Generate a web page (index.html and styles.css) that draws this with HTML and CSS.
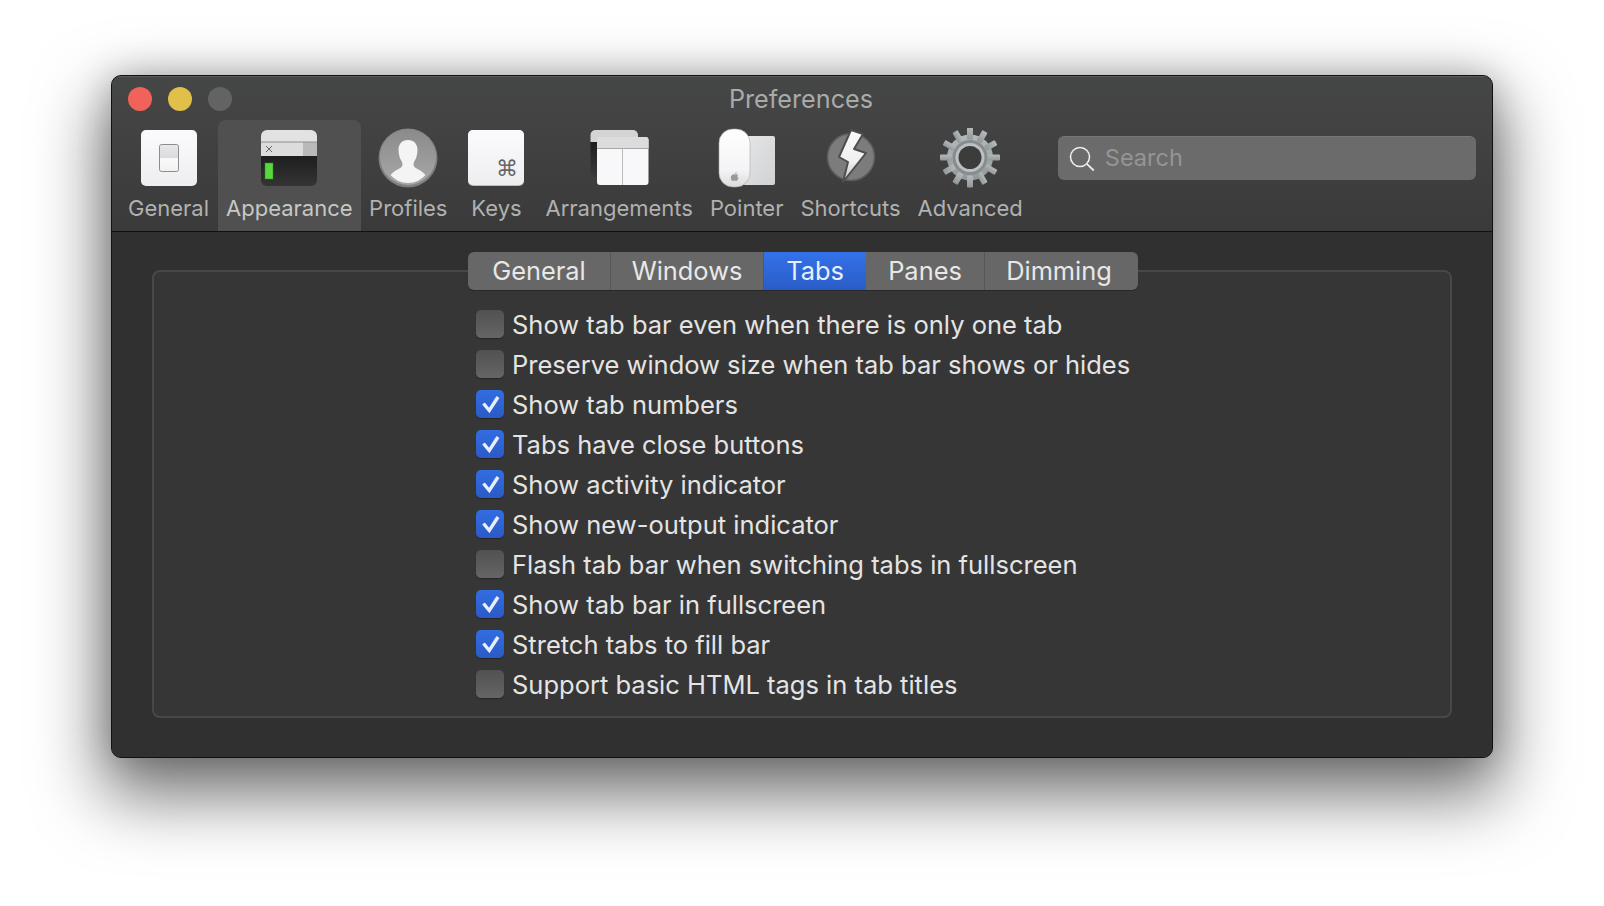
FILE: index.html
```html
<!DOCTYPE html>
<html lang="en">

<head>
    <meta charset="UTF-8">
    <title>Preferences</title>
    <link rel="stylesheet" href="styles.css">
</head>

<body>

    <div class="window">
        <div class="titlebar">
            <div class="lights">
                <span class="light red"></span>
                <span class="light yellow"></span>
                <span class="light gray"></span>
            </div>
            <div class="title">Preferences</div>
        </div>

        <div class="toolbar">
            <div class="tool">
                <svg class="icon" viewBox="0 0 64 60">
                    <defs>
                        <linearGradient id="tile" x1="0" y1="0" x2="0" y2="1">
                            <stop offset="0" stop-color="#fbfbfd"/>
                            <stop offset="1" stop-color="#eeeef0"/>
                        </linearGradient>
                        <linearGradient id="sw" x1="0" y1="0" x2="0" y2="1">
                            <stop offset="0" stop-color="#e8e8ea"/>
                            <stop offset="0.5" stop-color="#d9dade"/>
                            <stop offset="0.52" stop-color="#fafafa"/>
                            <stop offset="1" stop-color="#f0f0f0"/>
                        </linearGradient>
                    </defs>
                    <rect x="4" y="2" width="56" height="56" rx="5" fill="url(#tile)"/>
                    <rect x="22.5" y="16.5" width="19" height="27" rx="2" fill="url(#sw)" stroke="#8d8d8f"/>
                </svg>
                <span>General</span>
            </div>
            <div class="tool selected">
                <svg class="icon" viewBox="0 0 64 60">
                    <defs>
                        <linearGradient id="term" x1="0" y1="0" x2="0" y2="1">
                            <stop offset="0" stop-color="#1e1e1e"/>
                            <stop offset="1" stop-color="#343434"/>
                        </linearGradient>
                    </defs>
                    <path d="M4 28h56v24a6 6 0 0 1-6 6H10a6 6 0 0 1-6-6z" fill="url(#term)"/>
                    <path d="M4 14V8a6 6 0 0 1 6-6h44a6 6 0 0 1 6 6v6z" fill="#e2e2e3"/>
                    <rect x="4" y="14" width="42" height="14" fill="#dcdcdc"/>
                    <rect x="46" y="14" width="14" height="14" fill="#b9b9b9"/>
                    <path d="M4 14h56" stroke="#8e8e8e"/>
                    <path d="M9 18l6 6M15 18l-6 6" stroke="#666" stroke-width="1"/>
                    <rect x="8" y="35" width="8" height="16" fill="#5ad63f" stroke="#2f8a24" stroke-opacity="0.5"/>
                </svg>
                <span>Appearance</span>
            </div>
            <div class="tool">
                <svg class="icon" viewBox="0 0 64 60">
                    <defs>
                        <linearGradient id="disc" x1="0" y1="0" x2="0" y2="1">
                            <stop offset="0" stop-color="#8a8a8a"/>
                            <stop offset="1" stop-color="#a8a8a8"/>
                        </linearGradient>
                    </defs>
                    <circle cx="32" cy="30" r="29.5" fill="#7f7f7f"/>
                    <circle cx="32" cy="29" r="28" fill="url(#disc)"/>
                    <path d="M32 12C26 12 22.5 16 22.5 22C22.5 27 24 31 26 34C26.8 36 26.5 38.5 25 39.5C22 41.5 17.5 43 14.5 47C19 52 25 55 32 55C39 55 45 52 49.5 47C46.5 43 42 41.5 39 39.5C37.5 38.5 37.2 36 38 34C40 31 41.5 27 41.5 22C41.5 16 38 12 32 12Z" fill="#f4f4f4"/>
                </svg>
                <span>Profiles</span>
            </div>
            <div class="tool">
                <svg class="icon" viewBox="0 0 64 60">
                    <rect x="4" y="2" width="56" height="56" rx="5" fill="#bdbdbf"/>
                    <rect x="4" y="2" width="56" height="55" rx="5" fill="url(#tile)"/>
                    <text x="43" y="48" class="cmd">⌘</text>
                </svg>
                <span>Keys</span>
            </div>
            <div class="tool">
                <svg class="icon" viewBox="0 0 64 60">
                    <defs>
                        <linearGradient id="back" x1="0" y1="0" x2="0" y2="1">
                            <stop offset="0" stop-color="#1e1e1e"/>
                            <stop offset="1" stop-color="#3a3a3a"/>
                        </linearGradient>
                    </defs>
                    <path d="M3.5 14h12v34H7.5a4 4 0 0 1-4-4z" fill="url(#back)"/>
                    <path d="M3.5 14V7a5 5 0 0 1 5-5h37.500a5 5 0 0 1 5 5v4H16v3z" fill="#d4d4d4"/>
                    <path d="M10 12a3 3 0 0 1 3-3h45.500a3 3 0 0 1 3 3v42a3 3 0 0 1-3 3H13a3 3 0 0 1-3-3z" fill="#f8f8fa"/>
                    <path d="M10 20v-8a3 3 0 0 1 3-3h45.500a3 3 0 0 1 3 3v8z" fill="#dcdcdc"/>
                    <path d="M10 20.500h51.500" stroke="#a9a9a9"/>
                    <path d="M35.500 21v36" stroke="#bcbcbc"/>
                </svg>
                <span>Arrangements</span>
            </div>
            <div class="tool">
                <svg class="icon" viewBox="0 0 64 60">
                    <defs>
                        <linearGradient id="pad" x1="0" y1="0" x2="1" y2="1">
                            <stop offset="0" stop-color="#e4e6e7"/>
                            <stop offset="1" stop-color="#d0d2d3"/>
                        </linearGradient>
                        <linearGradient id="mouse" x1="0" y1="0" x2="0" y2="1">
                            <stop offset="0" stop-color="#ffffff"/>
                            <stop offset="0.7" stop-color="#f4f4f6"/>
                            <stop offset="1" stop-color="#dcdcdc"/>
                        </linearGradient>
                    </defs>
                    <rect x="28" y="8" width="32" height="49" rx="2" fill="url(#pad)"/>
                    <rect x="4" y="1" width="31" height="58" rx="14" fill="url(#mouse)" stroke="#a9abac" stroke-opacity="0.6"/>
                    <path d="M17 47c1-1 1.800-1 2.500-.7.700.3 1.300.3 2 0 .6-.3 1.200-.2 1.800.5-1.200.8-1.200 2.500.2 3.200-.5 1.500-1.200 2.800-2.200 2.900-.7 0-1-.4-1.800-.4s-1.100.4-1.800.4c-1.400-.1-3-4.300-.7-5.900zM20 45.800c0-1 .8-1.800 1.800-1.900 0 1-.8 1.900-1.800 1.900z" fill="#9a9a9a"/>
                </svg>
                <span>Pointer</span>
            </div>
            <div class="tool">
                <svg class="icon" viewBox="0 0 64 60">
                    <defs>
                        <linearGradient id="bolt" x1="0" y1="0" x2="0" y2="1">
                            <stop offset="0" stop-color="#fafafa"/>
                            <stop offset="0.6" stop-color="#f0f0f0"/>
                            <stop offset="1" stop-color="#c4c4c4"/>
                        </linearGradient>
                    </defs>
                    <circle cx="32" cy="29" r="23.5" fill="#7c7c7c" stroke="#5c5c5c" stroke-width="1.5"/>
                    <path d="M32 2L44 6L35 21L47 25L24 54L29 34L20 29Z" fill="url(#bolt)" stroke="#4e4e4e" stroke-width="2" stroke-linejoin="round"/>
                </svg>
                <span>Shortcuts</span>
            </div>
            <div class="tool">
                <svg class="icon" viewBox="0 0 64 60">
                    <defs>
                        <linearGradient id="gear" x1="0" y1="0" x2="0" y2="1">
                            <stop offset="0" stop-color="#b4b9bc"/>
                            <stop offset="1" stop-color="#92979a"/>
                        </linearGradient>
                    </defs>
                    <g fill="url(#gear)">
                        <circle cx="32" cy="29.5" r="23"/>
                        <g id="teeth">
                            <rect x="29" y="-0.5" width="6" height="12" rx="1"/>
                            <rect x="29" y="47.5" width="6" height="12" rx="1"/>
                            <rect x="2" y="26.5" width="12" height="6" rx="1"/>
                            <rect x="50" y="26.5" width="12" height="6" rx="1"/>
                        </g>
                        <use href="#teeth" transform="rotate(30 32 29.5)"/>
                        <use href="#teeth" transform="rotate(60 32 29.5)"/>
                    </g>
                    <circle cx="32" cy="29.5" r="17.5" fill="#878c8f"/>
                    <circle cx="32" cy="29.5" r="14.5" fill="#bcc0c3"/>
                    <circle cx="32" cy="29.5" r="11.5" fill="#3c3c3c"/>
                </svg>
                <span>Advanced</span>
            </div>
            <div class="search">
                <svg class="search-icon" viewBox="0 0 26 26">
                    <circle cx="11" cy="11" r="9.5" fill="none" stroke="#ececec" stroke-width="1.6"/>
                    <path d="M17.8 17.8l7 6.7" stroke="#ececec" stroke-width="1.8"/>
                </svg>
                <span>Search</span>
            </div>
        </div>

        <div class="content">
            <div class="panel">
                <div class="segments">
                    <div class="segment seg-general">General</div>
                    <div class="segment seg-windows">Windows</div>
                    <div class="segment seg-tabs active">Tabs</div>
                    <div class="segment seg-panes">Panes</div>
                    <div class="segment seg-dimming">Dimming</div>
                </div>
                <div class="options">
                    <div class="option"><span class="check"></span>Show tab bar even when there is only one tab</div>
                    <div class="option"><span class="check"></span>Preserve window size when tab bar shows or hides</div>
                    <div class="option"><span class="check on"><svg viewBox="0 0 28 28"><path d="M7.5 13.5l5.800 7L22 7"/></svg></span>Show tab numbers</div>
                    <div class="option"><span class="check on"><svg viewBox="0 0 28 28"><path d="M7.5 13.5l5.800 7L22 7"/></svg></span>Tabs have close buttons</div>
                    <div class="option"><span class="check on"><svg viewBox="0 0 28 28"><path d="M7.5 13.5l5.800 7L22 7"/></svg></span>Show activity indicator</div>
                    <div class="option"><span class="check on"><svg viewBox="0 0 28 28"><path d="M7.5 13.5l5.800 7L22 7"/></svg></span>Show new-output indicator</div>
                    <div class="option"><span class="check"></span>Flash tab bar when switching tabs in fullscreen</div>
                    <div class="option"><span class="check on"><svg viewBox="0 0 28 28"><path d="M7.5 13.5l5.800 7L22 7"/></svg></span>Show tab bar in fullscreen</div>
                    <div class="option"><span class="check on"><svg viewBox="0 0 28 28"><path d="M7.5 13.5l5.800 7L22 7"/></svg></span>Stretch tabs to fill bar</div>
                    <div class="option"><span class="check"></span>Support basic HTML tags in tab titles</div>
                </div>
            </div>
        </div>
    </div>

</body>

</html>
```

FILE: styles.css
```css
html,
body {
    margin: 0;
    padding: 0;
    height: 100%;
    overflow: hidden;
}

body {
    font-family: Inter, "Liberation Sans", sans-serif;
    background-color: #fff;
    padding: 75px 111px;
    box-sizing: border-box;
}

.window {
    width: 1382px;
    height: 683px;
    box-sizing: border-box;
    display: flex;
    flex-direction: column;
    border: 1px solid #111;
    border-radius: 10px;
    box-shadow: inset 0 0 0 1px #5c5c5c, 0 30px 68px 8px rgba(0, 0, 0, 0.55), 0 0 34px rgba(0, 0, 0, 0.2);
    background-color: #303030;
    overflow: hidden;
}

.titlebar {
    height: 44px;
    flex: none;
    display: grid;
    grid-template-columns: 1fr auto 1fr;
    align-items: center;
    background: linear-gradient(#454746, #424342);
    border-top: 1px solid #5c5c5c;
    box-sizing: border-box;
}

.lights {
    display: flex;
    gap: 16px;
    padding-left: 16px;
}

.light {
    width: 24px;
    height: 24px;
    border-radius: 50%;
}

.red {
    background-color: #f0625a;
}

.yellow {
    background-color: #e0c04a;
}

.gray {
    background-color: #626362;
}

.title {
    color: #a9aaa9;
    font-size: 25.2px;
    margin-right: 2px;
    grid-column: 2;
}

.toolbar {
    height: 112px;
    flex: none;
    display: flex;
    padding-left: 7.5px;
    box-sizing: border-box;
    background: linear-gradient(#424342, #3a3a3a);
    border-bottom: 1px solid #111;
}

.tool {
    display: flex;
    flex-direction: column;
    align-items: center;
    padding: 8px 8.5px 0;
    color: #b0b1b0;
    font-size: 22px;
    border-radius: 8px 8px 0 0;
    white-space: nowrap;
}

.tool span {
    margin-top: 7px;
}

.tool.selected {
    padding: 8px 8px 0 8.5px;
    background-color: #4f504f;
    color: #c6c7c6;
}

.icon {
    width: 64px;
    height: 60px;
    flex: none;
}

.cmd {
    font-family: "DejaVu Sans", sans-serif;
    font-size: 22px;
    fill: #666;
    text-anchor: middle;
}

.search {
    flex: none;
    width: 418px;
    height: 44px;
    margin: 16px 0 0 26.5px;
    padding: 0 0 2px 11px;
    box-sizing: border-box;
    display: flex;
    align-items: center;
    gap: 10px;
    background-color: #6a6b6a;
    border-top: 1px solid #777;
    border-radius: 6px;
    color: #949594;
    font-size: 23.5px;
}

.search-icon {
    width: 26px;
    height: 26px;
    margin-top: 2px;
}

.content {
    flex: 1;
    padding: 38px 40px 39px;
    background-color: #303030;
}

.panel {
    height: 100%;
    box-sizing: border-box;
    border: 2px solid #484848;
    border-radius: 8px;
    background-color: #363636;
    display: flex;
    flex-direction: column;
    align-items: flex-start;
    padding-left: 314px;
}

.segments {
    display: flex;
    height: 38px;
    margin-top: -20px;
    border-radius: 6px;
    overflow: hidden;
    background-color: #666766;
    box-shadow: 0 1px 0 rgba(0, 0, 0, 0.25);
}

.segment {
    display: flex;
    align-items: center;
    justify-content: center;
    box-sizing: border-box;
    padding-bottom: 2px;
    color: #e8e8e8;
    font-size: 25.4px;
    border-right: 1px solid #555655;
}

.seg-general {
    width: 143px;
}

.seg-windows {
    width: 153px;
}

.seg-tabs {
    width: 102px;
}

.seg-panes {
    width: 119px;
}

.seg-dimming {
    width: 153px;
    padding-right: 5px;
    border-right: none;
}

.segment.active {
    background: linear-gradient(#3372e8, #2a5cc8);
    color: #e6effc;
    border-right: none;
}

.options {
    display: flex;
    flex-direction: column;
    gap: 12px;
    margin: 20px 0 0 8px;
}

.option {
    display: flex;
    align-items: center;
    height: 28px;
    gap: 8px;
    color: #e4e4e4;
    font-size: 25.5px;
    white-space: nowrap;
}

.check {
    width: 28px;
    height: 28px;
    flex: none;
    box-sizing: border-box;
    border-radius: 5px;
    background: linear-gradient(#505150, #646564);
    box-shadow: 0 1px 1px rgba(0, 0, 0, 0.3);
}

.check.on {
    background: linear-gradient(#336de2, #2a5ac6);
}

.check svg {
    display: block;
    width: 28px;
    height: 28px;
    fill: none;
    stroke: #e8eefb;
    stroke-width: 3.4;
}
```
